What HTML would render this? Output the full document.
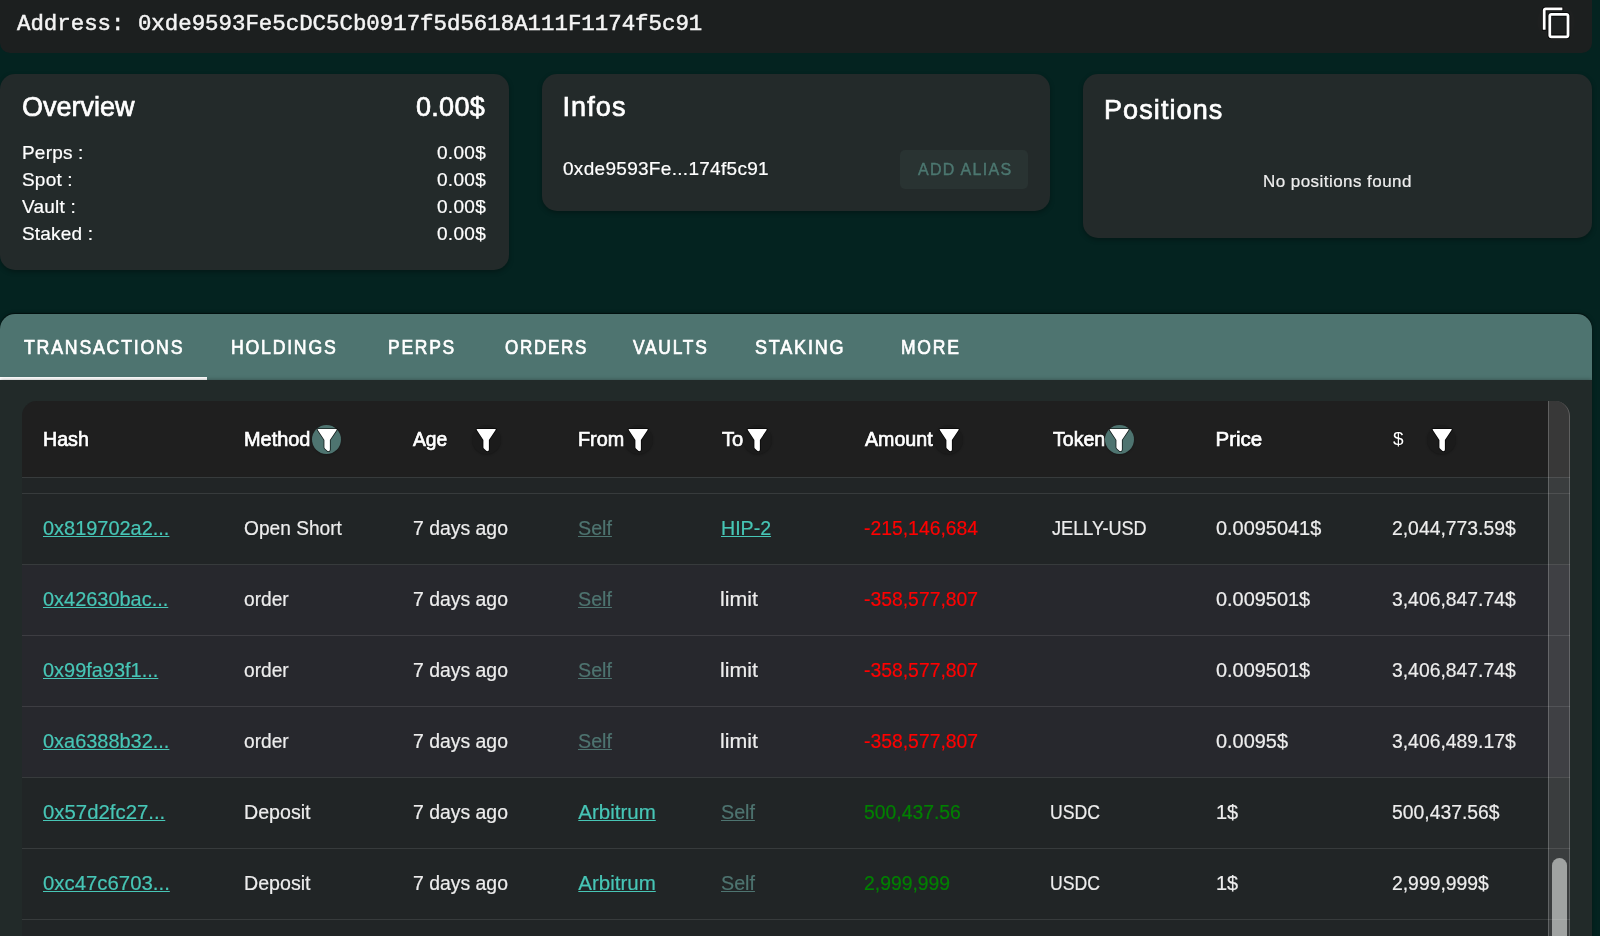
<!DOCTYPE html>
<html><head><meta charset="utf-8">
<style>
*{margin:0;padding:0;box-sizing:border-box}
html,body{width:1600px;height:936px;overflow:hidden;background:#042320;font-family:"Liberation Sans",sans-serif;color:#fff}
#root{position:absolute;left:0;top:0;width:1600px;height:936px;overflow:hidden;will-change:transform}
.a{position:absolute;white-space:nowrap}
.md{font-weight:normal;-webkit-text-stroke:0.7px currentColor}
#top{position:absolute;left:0;top:-20px;width:1592px;height:72.5px;background:#1c1f1f;border-radius:10px}
#addr{font-family:"Liberation Mono",monospace;font-size:22.4px;left:17px;top:10.5px;color:#f4f4f4;-webkit-text-stroke:0.5px currentColor}
.card{position:absolute;background:#232a2a;border-radius:15px;top:74px;box-shadow:0 2px 5px rgba(0,0,0,0.3)}
#tabs{position:absolute;left:0;top:314px;width:1592px;height:66px;background:#4e7470;border-radius:15px 15px 0 0;box-shadow:0 -0.5px 1px rgba(0,0,0,0.5),0 0 4px rgba(0,0,0,0.35)}
.tab{position:absolute;top:335.5px;font-size:20px;font-weight:normal;-webkit-text-stroke:0.7px #fff;color:#fff;transform-origin:0 0}
#ind{position:absolute;left:0;top:377px;width:207px;height:3px;background:#fff}
#panel{position:absolute;left:0;top:380px;width:1592px;height:556px;background:#222a29;box-shadow:0 0 4px rgba(0,0,0,0.35)}
#tbl{position:absolute;left:22px;top:401px;width:1548px;height:600px;border-radius:15px 15px 0 0;overflow:hidden;background:#212526}
.th{position:absolute;top:426.6px;font-size:20.5px;transform-origin:0 0;font-weight:normal;-webkit-text-stroke:0.7px #fff;color:#fff;text-shadow:0 0 2px #000}
.td{position:absolute;font-size:20.5px;transform-origin:0 0;color:#ededed;-webkit-text-stroke:0.2px currentColor}
.ln{position:absolute;left:22px;width:1548px;height:1px;background:rgba(255,255,255,0.1)}
.lk{color:#47c6b6;text-decoration:underline;text-decoration-thickness:1.3px;text-underline-offset:1.2px}
.mu{color:#4e7470;text-decoration:underline;text-decoration-thickness:1.3px;text-underline-offset:1.2px}
.rd{color:#ff0000}
.gr{color:#008000}
.fi{position:absolute;top:425px;width:29px;height:29px;border-radius:50%;box-shadow:0 1px 2px rgba(0,0,0,0.25)}
</style></head><body>
<div id="root">
<div id="top"></div>
<div class="a" id="addr">Address: 0xde9593Fe5cDC5Cb0917f5d5618A111F1174f5c91</div>
<div class="a" style="left:1537px;top:3px;width:38px;height:38px;border-radius:50%;background:#1e2020"></div>
<svg class="a" style="left:1540.2px;top:5.6px;overflow:visible" width="33.6" height="33.6" viewBox="0 0 24 24"><path fill="#fff" stroke="#000" stroke-width="1.1" paint-order="stroke" d="M16 1H4c-1.1 0-2 .9-2 2v14h2V3h12V1zm3 4H8c-1.1 0-2 .9-2 2v14c0 1.1.9 2 2 2h11c1.1 0 2-.9 2-2V7c0-1.1-.9-2-2-2zm0 16H8V7h11v14z"/></svg>
<div class="card" style="left:0;width:509px;height:196px"></div>
<div class="card" style="left:542px;width:508px;height:137px"></div>
<div class="card" style="left:1083px;width:509px;height:164px"></div>
<div class="a md" style="left:22px;top:92px;font-size:27px">Overview</div>
<div class="a md" style="left:416px;top:92px;font-size:27px;letter-spacing:0.3px">0.00$</div>
<div class="a" style="left:22px;top:139px;font-size:19px;line-height:27.1px;letter-spacing:0.2px;-webkit-text-stroke:0.2px #fff">Perps :<br>Spot :<br>Vault :<br>Staked :</div>
<div class="a" style="left:437px;top:139px;font-size:19px;line-height:27.1px;letter-spacing:0.3px;-webkit-text-stroke:0.2px #fff">0.00$<br>0.00$<br>0.00$<br>0.00$</div>
<div class="a md" style="left:562.5px;top:92px;font-size:27px;letter-spacing:1.1px">Infos</div>
<div class="a" style="left:563px;top:158px;font-size:19px;letter-spacing:0.3px;-webkit-text-stroke:0.2px #fff">0xde9593Fe...174f5c91</div>
<div class="a" style="left:900px;top:150px;width:128px;height:39px;background:#293332;border-radius:5px"></div>
<div class="a" style="left:918px;top:161px;font-size:16px;letter-spacing:1.3px;color:#4c7770;-webkit-text-stroke:0.4px currentColor">ADD ALIAS</div>
<div class="a md" style="left:1104px;top:95px;font-size:27px;letter-spacing:1.1px">Positions</div>
<div class="a" style="left:1263px;top:171.5px;font-size:17px;letter-spacing:0.45px;color:#eee;-webkit-text-stroke:0.2px currentColor">No positions found</div>
<div id="tabs"></div>
<div class="tab" style="left:24.00px;letter-spacing:2px;transform:scaleX(0.8872)">TRANSACTIONS</div>
<div class="tab" style="left:230.52px;letter-spacing:2px;transform:scaleX(0.8839)">HOLDINGS</div>
<div class="tab" style="left:387.73px;letter-spacing:2px;transform:scaleX(0.8743)">PERPS</div>
<div class="tab" style="left:504.85px;letter-spacing:2px;transform:scaleX(0.8521)">ORDERS</div>
<div class="tab" style="left:633.00px;letter-spacing:2px;transform:scaleX(0.8690)">VAULTS</div>
<div class="tab" style="left:755.20px;letter-spacing:2px;transform:scaleX(0.9000)">STAKING</div>
<div class="tab" style="left:900.62px;letter-spacing:2px;transform:scaleX(0.8769)">MORE</div>
<div id="ind"></div>
<div id="panel"></div>
<div id="tbl"><div style="position:absolute;left:0;top:0;width:1548px;height:76px;background:#1f1f1f"></div>
<div style="position:absolute;left:0;top:164px;width:1548px;height:212px;background:#27282d"></div>
</div>
<div class="th" style="left:43.24px;transform:scaleX(0.9587)">Hash</div>
<div class="th" style="left:244.43px;transform:scaleX(0.9716)">Method</div>
<div class="th" style="left:413.40px;transform:scaleX(0.9389)">Age</div>
<div class="th" style="left:577.63px;transform:scaleX(0.9652)">From</div>
<div class="th" style="left:722.30px;transform:scaleX(0.9857)">To</div>
<div class="th" style="left:865.40px;transform:scaleX(0.9577)">Amount</div>
<div class="th" style="left:1052.50px;transform:scaleX(0.9537)">Token</div>
<div class="th" style="left:1215.50px;transform:scaleX(1.0000)">Price</div>
<div class="th" style="left:1393px;font-size:19px;-webkit-text-stroke:0;top:428px">$</div>
<div class="fi" style="left:312.2px;background:#4e7470"></div>
<svg class="a" style="left:316.5px;top:428.5px;overflow:visible" width="20.4" height="22.4" viewBox="0 0 20.4 22.4"><path fill="#fff" stroke="rgba(0,0,0,0.75)" stroke-width="1.6" stroke-linejoin="round" paint-order="stroke" d="M1.3,0 H19.1 Q20.3,0 19.6,1.1 L12.9,10.9 V20.6 Q12.9,22.4 11.1,22.1 Q10.6,22 10.3,21.7 L7.9,19.5 Q7.4,19 7.4,18.3 V10.9 L0.8,1.1 Q0.1,0 1.3,0 Z"/></svg>
<div class="fi" style="left:471.7px;background:rgba(0,0,0,0.12)"></div>
<svg class="a" style="left:476.0px;top:428.5px;overflow:visible" width="20.4" height="22.4" viewBox="0 0 20.4 22.4"><path fill="#fff" stroke="rgba(0,0,0,0.75)" stroke-width="1.6" stroke-linejoin="round" paint-order="stroke" d="M1.3,0 H19.1 Q20.3,0 19.6,1.1 L12.9,10.9 V20.6 Q12.9,22.4 11.1,22.1 Q10.6,22 10.3,21.7 L7.9,19.5 Q7.4,19 7.4,18.3 V10.9 L0.8,1.1 Q0.1,0 1.3,0 Z"/></svg>
<div class="fi" style="left:623.9px;background:rgba(0,0,0,0.12)"></div>
<svg class="a" style="left:628.2px;top:428.5px;overflow:visible" width="20.4" height="22.4" viewBox="0 0 20.4 22.4"><path fill="#fff" stroke="rgba(0,0,0,0.75)" stroke-width="1.6" stroke-linejoin="round" paint-order="stroke" d="M1.3,0 H19.1 Q20.3,0 19.6,1.1 L12.9,10.9 V20.6 Q12.9,22.4 11.1,22.1 Q10.6,22 10.3,21.7 L7.9,19.5 Q7.4,19 7.4,18.3 V10.9 L0.8,1.1 Q0.1,0 1.3,0 Z"/></svg>
<div class="fi" style="left:743.1px;background:rgba(0,0,0,0.12)"></div>
<svg class="a" style="left:747.4px;top:428.5px;overflow:visible" width="20.4" height="22.4" viewBox="0 0 20.4 22.4"><path fill="#fff" stroke="rgba(0,0,0,0.75)" stroke-width="1.6" stroke-linejoin="round" paint-order="stroke" d="M1.3,0 H19.1 Q20.3,0 19.6,1.1 L12.9,10.9 V20.6 Q12.9,22.4 11.1,22.1 Q10.6,22 10.3,21.7 L7.9,19.5 Q7.4,19 7.4,18.3 V10.9 L0.8,1.1 Q0.1,0 1.3,0 Z"/></svg>
<div class="fi" style="left:934.2px;background:rgba(0,0,0,0.12)"></div>
<svg class="a" style="left:938.5px;top:428.5px;overflow:visible" width="20.4" height="22.4" viewBox="0 0 20.4 22.4"><path fill="#fff" stroke="rgba(0,0,0,0.75)" stroke-width="1.6" stroke-linejoin="round" paint-order="stroke" d="M1.3,0 H19.1 Q20.3,0 19.6,1.1 L12.9,10.9 V20.6 Q12.9,22.4 11.1,22.1 Q10.6,22 10.3,21.7 L7.9,19.5 Q7.4,19 7.4,18.3 V10.9 L0.8,1.1 Q0.1,0 1.3,0 Z"/></svg>
<div class="fi" style="left:1104.5px;background:#4e7470"></div>
<svg class="a" style="left:1108.8px;top:428.5px;overflow:visible" width="20.4" height="22.4" viewBox="0 0 20.4 22.4"><path fill="#fff" stroke="rgba(0,0,0,0.75)" stroke-width="1.6" stroke-linejoin="round" paint-order="stroke" d="M1.3,0 H19.1 Q20.3,0 19.6,1.1 L12.9,10.9 V20.6 Q12.9,22.4 11.1,22.1 Q10.6,22 10.3,21.7 L7.9,19.5 Q7.4,19 7.4,18.3 V10.9 L0.8,1.1 Q0.1,0 1.3,0 Z"/></svg>
<div class="fi" style="left:1427.2px;background:rgba(0,0,0,0.12)"></div>
<svg class="a" style="left:1431.5px;top:428.5px;overflow:visible" width="20.4" height="22.4" viewBox="0 0 20.4 22.4"><path fill="#fff" stroke="rgba(0,0,0,0.75)" stroke-width="1.6" stroke-linejoin="round" paint-order="stroke" d="M1.3,0 H19.1 Q20.3,0 19.6,1.1 L12.9,10.9 V20.6 Q12.9,22.4 11.1,22.1 Q10.6,22 10.3,21.7 L7.9,19.5 Q7.4,19 7.4,18.3 V10.9 L0.8,1.1 Q0.1,0 1.3,0 Z"/></svg>
<div class="a" style="left:1548px;top:401px;width:22px;height:540px;background:rgba(255,255,255,0.115);border-top-right-radius:15px;border-left:1px solid rgba(255,255,255,0.2);border-right:1px solid rgba(255,255,255,0.2)"></div>
<div class="a" style="left:1552px;top:858px;width:15px;height:100px;background:#a0a3a2;border-radius:7.5px"></div>
<div class="ln" style="top:477px"></div>
<div class="ln" style="top:493px"></div>
<div class="ln" style="top:564px"></div>
<div class="ln" style="top:635px"></div>
<div class="ln" style="top:706px"></div>
<div class="ln" style="top:777px"></div>
<div class="ln" style="top:848px"></div>
<div class="ln" style="top:919px"></div>
<div class="td" style="left:43.03px;top:516px;transform:scaleX(0.9727)"><span class="lk">0x819702a2...</span></div>
<div class="td" style="left:244.07px;top:516px;transform:scaleX(0.9337)"><span>Open Short</span></div>
<div class="td" style="left:412.85px;top:516px;transform:scaleX(0.9465)"><span>7 days ago</span></div>
<div class="td" style="left:577.74px;top:516px;transform:scaleX(0.9600)"><span class="mu">Self</span></div>
<div class="td" style="left:720.75px;top:516px;transform:scaleX(0.9549)"><span class="lk">HIP-2</span></div>
<div class="td" style="left:863.76px;top:516px;transform:scaleX(0.9442)"><span class="rd">-215,146,684</span></div>
<div class="td" style="left:1051.90px;top:516px;transform:scaleX(0.8840)"><span>JELLY-USD</span></div>
<div class="td" style="left:1215.63px;top:516px;transform:scaleX(0.9720)"><span>0.0095041$</span></div>
<div class="td" style="left:1392.06px;top:516px;transform:scaleX(0.9431)"><span>2,044,773.59$</span></div>
<div class="td" style="left:43.03px;top:587px;transform:scaleX(0.9727)"><span class="lk">0x42630bac...</span></div>
<div class="td" style="left:244.07px;top:587px;transform:scaleX(0.9337)"><span>order</span></div>
<div class="td" style="left:412.85px;top:587px;transform:scaleX(0.9465)"><span>7 days ago</span></div>
<div class="td" style="left:577.74px;top:587px;transform:scaleX(0.9600)"><span class="mu">Self</span></div>
<div class="td" style="left:720.46px;top:587px;transform:scaleX(1.0417)"><span>limit</span></div>
<div class="td" style="left:863.76px;top:587px;transform:scaleX(0.9442)"><span class="rd">-358,577,807</span></div>
<div class="td" style="left:1215.63px;top:587px;transform:scaleX(0.9720)"><span>0.009501$</span></div>
<div class="td" style="left:1392.06px;top:587px;transform:scaleX(0.9431)"><span>3,406,847.74$</span></div>
<div class="td" style="left:43.03px;top:658px;transform:scaleX(0.9727)"><span class="lk">0x99fa93f1...</span></div>
<div class="td" style="left:244.07px;top:658px;transform:scaleX(0.9337)"><span>order</span></div>
<div class="td" style="left:412.85px;top:658px;transform:scaleX(0.9465)"><span>7 days ago</span></div>
<div class="td" style="left:577.74px;top:658px;transform:scaleX(0.9600)"><span class="mu">Self</span></div>
<div class="td" style="left:720.46px;top:658px;transform:scaleX(1.0417)"><span>limit</span></div>
<div class="td" style="left:863.76px;top:658px;transform:scaleX(0.9442)"><span class="rd">-358,577,807</span></div>
<div class="td" style="left:1215.63px;top:658px;transform:scaleX(0.9720)"><span>0.009501$</span></div>
<div class="td" style="left:1392.06px;top:658px;transform:scaleX(0.9431)"><span>3,406,847.74$</span></div>
<div class="td" style="left:43.03px;top:729px;transform:scaleX(0.9727)"><span class="lk">0xa6388b32...</span></div>
<div class="td" style="left:244.07px;top:729px;transform:scaleX(0.9337)"><span>order</span></div>
<div class="td" style="left:412.85px;top:729px;transform:scaleX(0.9465)"><span>7 days ago</span></div>
<div class="td" style="left:577.74px;top:729px;transform:scaleX(0.9600)"><span class="mu">Self</span></div>
<div class="td" style="left:720.46px;top:729px;transform:scaleX(1.0417)"><span>limit</span></div>
<div class="td" style="left:863.76px;top:729px;transform:scaleX(0.9442)"><span class="rd">-358,577,807</span></div>
<div class="td" style="left:1215.63px;top:729px;transform:scaleX(0.9720)"><span>0.0095$</span></div>
<div class="td" style="left:1392.06px;top:729px;transform:scaleX(0.9431)"><span>3,406,489.17$</span></div>
<div class="td" style="left:42.51px;top:800px;transform:scaleX(0.9934)"><span class="lk">0x57d2fc27...</span></div>
<div class="td" style="left:244.34px;top:800px;transform:scaleX(0.9565)"><span>Deposit</span></div>
<div class="td" style="left:412.85px;top:800px;transform:scaleX(0.9465)"><span>7 days ago</span></div>
<div class="td" style="left:578.30px;top:800px;transform:scaleX(1.0000)"><span class="lk">Arbitrum</span></div>
<div class="td" style="left:720.74px;top:800px;transform:scaleX(0.9600)"><span class="mu">Self</span></div>
<div class="td" style="left:863.76px;top:800px;transform:scaleX(0.9442)"><span class="gr">500,437.56</span></div>
<div class="td" style="left:1050.14px;top:800px;transform:scaleX(0.8596)"><span>USDC</span></div>
<div class="td" style="left:1215.63px;top:800px;transform:scaleX(0.9720)"><span>1$</span></div>
<div class="td" style="left:1392.06px;top:800px;transform:scaleX(0.9431)"><span>500,437.56$</span></div>
<div class="td" style="left:42.51px;top:871px;transform:scaleX(0.9934)"><span class="lk">0xc47c6703...</span></div>
<div class="td" style="left:244.34px;top:871px;transform:scaleX(0.9565)"><span>Deposit</span></div>
<div class="td" style="left:412.85px;top:871px;transform:scaleX(0.9465)"><span>7 days ago</span></div>
<div class="td" style="left:578.30px;top:871px;transform:scaleX(1.0000)"><span class="lk">Arbitrum</span></div>
<div class="td" style="left:720.74px;top:871px;transform:scaleX(0.9600)"><span class="mu">Self</span></div>
<div class="td" style="left:863.76px;top:871px;transform:scaleX(0.9442)"><span class="gr">2,999,999</span></div>
<div class="td" style="left:1050.14px;top:871px;transform:scaleX(0.8596)"><span>USDC</span></div>
<div class="td" style="left:1215.63px;top:871px;transform:scaleX(0.9720)"><span>1$</span></div>
<div class="td" style="left:1392.06px;top:871px;transform:scaleX(0.9431)"><span>2,999,999$</span></div>
</div>
</body></html>
